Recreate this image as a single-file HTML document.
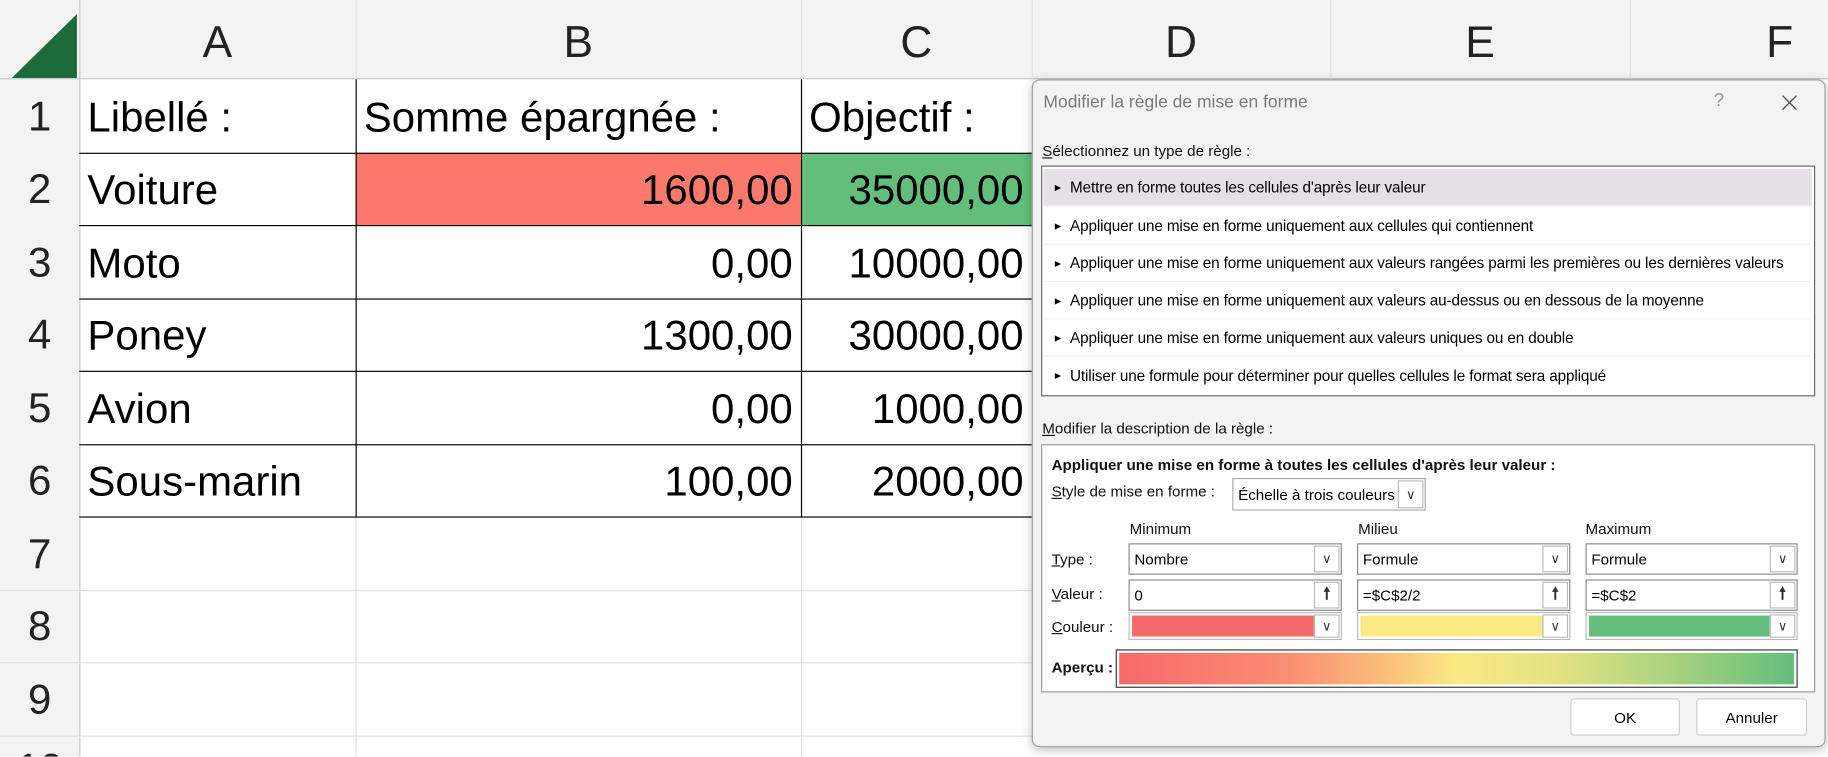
<!DOCTYPE html>
<html><head><meta charset="utf-8"><style>
*{margin:0;padding:0;box-sizing:border-box}
html,body{width:1828px;height:757px;overflow:hidden;background:#fff}
#w{position:absolute;left:0;top:0;width:1568px;height:649px;overflow:hidden;transform:scale(1.16582);transform-origin:0 0;font-family:"Liberation Sans",sans-serif;background:#fff}
.a{position:absolute}
.hdr{background:#f3f3f3}
.col{position:absolute;top:0;height:68px;font-size:38px;color:#222;display:flex;align-items:center;justify-content:center;padding-top:6px}
.rn{position:absolute;left:0;width:68px;height:62px;font-size:36px;color:#222;display:flex;align-items:center;justify-content:center}
.c{position:absolute;height:63px;font-size:36px;color:#000;display:flex;align-items:center;padding:0 7px;white-space:nowrap}
.r{justify-content:flex-end}
.d{font-size:13px;color:#111}
.item{position:absolute;left:2px;width:658px;height:32px;font-size:13.1px;display:flex;align-items:center;padding-left:8px;border-bottom:1px solid #f0f0f0;white-space:nowrap;letter-spacing:-0.1px}
.item span{font-size:9px;margin-right:6px}
.box{position:absolute;background:#fff;border:1px solid #8a8a8a;font-size:13px;display:flex;align-items:center;padding-left:4px}
.btn{position:absolute;right:1px;top:1px;bottom:1px;width:22px;border:1px solid #bbb;background:#fff;display:flex;align-items:center;justify-content:center;font-size:11px;color:#333}
u{text-decoration:underline}
</style></head><body><div id="w">
<div class="a hdr" style="left:0;top:0;width:1568px;height:68px"></div>
<div class="a hdr" style="left:0;top:0;width:68px;height:649px"></div>
<svg class="a" style="left:10px;top:12px" width="57" height="55"><polygon points="56,0 56,55 0,55" fill="#1e6b3a"/></svg>
<div class="col" style="left:68px;width:237px">A</div>
<div class="col" style="left:305px;width:382px">B</div>
<div class="col" style="left:687px;width:198px">C</div>
<div class="col" style="left:885px;width:256px">D</div>
<div class="col" style="left:1141px;width:257px">E</div>
<div class="col" style="left:1398px;width:257px">F</div>
<div class="a" style="left:0;top:67px;width:1568px;height:1px;background:#c8c8c8"></div>
<div class="a" style="left:68px;top:0;width:1px;height:649px;background:#c8c8c8"></div>
<div class="a" style="left:305px;top:0;width:1px;height:68px;background:#e4e4e4"></div>
<div class="a" style="left:687px;top:0;width:1px;height:68px;background:#e4e4e4"></div>
<div class="a" style="left:885px;top:0;width:1px;height:68px;background:#e4e4e4"></div>
<div class="a" style="left:1141px;top:0;width:1px;height:68px;background:#e4e4e4"></div>
<div class="a" style="left:1398px;top:0;width:1px;height:68px;background:#e4e4e4"></div>
<div class="rn" style="top:69px">1</div><div class="rn" style="top:131px">2</div><div class="rn" style="top:194px">3</div><div class="rn" style="top:256px">4</div><div class="rn" style="top:319px">5</div><div class="rn" style="top:381px">6</div><div class="rn" style="top:444px">7</div><div class="rn" style="top:506px">8</div><div class="rn" style="top:569px">9</div>
<div class="a" style="left:14px;top:641px;font-size:36px;line-height:36px;color:#222">10</div>
<div class="a" style="left:0;top:506px;width:885px;height:1px;background:#e0e0e0"></div>
<div class="a" style="left:0;top:568px;width:885px;height:1px;background:#e0e0e0"></div>
<div class="a" style="left:0;top:631px;width:885px;height:1px;background:#e0e0e0"></div>
<div class="a" style="left:305px;top:443px;width:1px;height:206px;background:#e0e0e0"></div>
<div class="a" style="left:687px;top:443px;width:1px;height:206px;background:#e0e0e0"></div>
<div class="a" style="left:305px;top:131px;width:382px;height:62px;background:#fb786c"></div>
<div class="a" style="left:687px;top:131px;width:198px;height:62px;background:#63be7b"></div>
<div class="a" style="left:68px;top:131px;width:817px;height:1px;background:#000"></div>
<div class="a" style="left:68px;top:193px;width:817px;height:1px;background:#000"></div>
<div class="a" style="left:68px;top:256px;width:817px;height:1px;background:#000"></div>
<div class="a" style="left:68px;top:318px;width:817px;height:1px;background:#000"></div>
<div class="a" style="left:68px;top:381px;width:817px;height:1px;background:#000"></div>
<div class="a" style="left:68px;top:443px;width:817px;height:1px;background:#000"></div>
<div class="a" style="left:305px;top:68px;width:1px;height:375px;background:#000"></div>
<div class="a" style="left:687px;top:68px;width:1px;height:375px;background:#000"></div>
<div class="c" style="left:68px;top:69px">Libellé :</div>
<div class="c" style="left:305px;top:69px">Somme épargnée :</div>
<div class="c" style="left:687px;top:69px">Objectif :</div>
<div class="c" style="left:68px;top:131px">Voiture</div>
<div class="c" style="left:68px;top:194px">Moto</div>
<div class="c" style="left:68px;top:256px">Poney</div>
<div class="c" style="left:68px;top:319px">Avion</div>
<div class="c" style="left:68px;top:381px">Sous-marin</div>
<div class="c r" style="left:305px;width:382px;top:131px">1600,00</div>
<div class="c r" style="left:305px;width:382px;top:194px">0,00</div>
<div class="c r" style="left:305px;width:382px;top:256px">1300,00</div>
<div class="c r" style="left:305px;width:382px;top:319px">0,00</div>
<div class="c r" style="left:305px;width:382px;top:381px">100,00</div>
<div class="c r" style="left:687px;width:198px;top:131px">35000,00</div>
<div class="c r" style="left:687px;width:198px;top:194px">10000,00</div>
<div class="c r" style="left:687px;width:198px;top:256px">30000,00</div>
<div class="c r" style="left:687px;width:198px;top:319px">1000,00</div>
<div class="c r" style="left:687px;width:198px;top:381px">2000,00</div>
<div class="a" style="left:885px;top:68px;width:681px;height:573px;background:#f3f3f3;border:1px solid #a0a0a0;border-radius:7px;box-shadow:0 2px 8px rgba(0,0,0,.25)"></div>
<div class="a" style="left:895px;top:79px;font-size:15px;color:#7a7a7a">Modifier la règle de mise en forme</div>
<div class="a" style="left:1470px;top:78px;font-size:16px;color:#999">?</div>
<svg class="a" style="left:1528px;top:81px" width="14" height="14"><path d="M1 1L13 13M13 1L1 13" stroke="#555" stroke-width="1.2"/></svg>
<div class="a d" style="left:894px;top:122px"><u>S</u>électionnez un type de règle :</div>
<div class="a" style="left:893px;top:142px;width:664px;height:198px;background:#fff;border:1px solid #666"></div>
<div class="a" style="left:895px;top:145px;width:659px;height:32px;background:#e6dfe6"></div>
<div class="item" style="left:895px;top:145px"><span>►</span>Mettre en forme toutes les cellules d'après leur valeur</div>
<div class="item" style="left:895px;top:178px"><span>►</span>Appliquer une mise en forme uniquement aux cellules qui contiennent</div>
<div class="item" style="left:895px;top:210px"><span>►</span>Appliquer une mise en forme uniquement aux valeurs rangées parmi les premières ou les dernières valeurs</div>
<div class="item" style="left:895px;top:242px"><span>►</span>Appliquer une mise en forme uniquement aux valeurs au-dessus ou en dessous de la moyenne</div>
<div class="item" style="left:895px;top:274px"><span>►</span>Appliquer une mise en forme uniquement aux valeurs uniques ou en double</div>
<div class="item" style="left:895px;top:306px;border:none"><span>►</span>Utiliser une formule pour déterminer pour quelles cellules le format sera appliqué</div>
<div class="a d" style="left:894px;top:360px"><u>M</u>odifier la description de la règle :</div>
<div class="a" style="left:893px;top:381px;width:664px;height:213px;background:#fff;border:1px solid #999"></div>
<div class="a d" style="left:902px;top:391px;font-weight:bold">Appliquer une mise en forme à toutes les cellules d'après leur valeur :</div>
<div class="a d" style="left:902px;top:414px"><u>S</u>tyle de mise en forme :</div>
<div class="box" style="left:1057px;top:410px;width:166px;height:28px;border-color:#aaa">Échelle à trois couleurs<div class="btn">∨</div></div>
<div class="a d" style="left:969px;top:446px">Minimum</div>
<div class="a d" style="left:1165px;top:446px">Milieu</div>
<div class="a d" style="left:1360px;top:446px">Maximum</div>
<div class="a d" style="left:902px;top:472px"><u>T</u>ype :</div>
<div class="a d" style="left:902px;top:502px"><u>V</u>aleur :</div>
<div class="a d" style="left:902px;top:530px"><u>C</u>ouleur :</div>
<div class="box" style="left:968px;top:466px;width:183px;height:27px">Nombre<div class="btn">∨</div></div>
<div class="box" style="left:1164px;top:466px;width:183px;height:27px">Formule<div class="btn">∨</div></div>
<div class="box" style="left:1360px;top:466px;width:182px;height:27px">Formule<div class="btn">∨</div></div>
<div class="box" style="left:968px;top:497px;width:183px;height:27px">0<div class="btn" style="font-size:14px;font-weight:bold">🠕</div></div>
<div class="box" style="left:1164px;top:497px;width:183px;height:27px">=$C$2/2<div class="btn" style="font-size:14px;font-weight:bold">🠕</div></div>
<div class="box" style="left:1360px;top:497px;width:182px;height:27px">=$C$2<div class="btn" style="font-size:14px;font-weight:bold">🠕</div></div>
<div class="box" style="left:968px;top:525px;width:183px;height:24px;border-color:#bbb;padding:2px"><div style="width:158px;height:18px;background:#f8696b"></div><div class="btn">∨</div></div>
<div class="box" style="left:1164px;top:525px;width:183px;height:24px;border-color:#bbb;padding:2px"><div style="width:158px;height:18px;background:#fbe983"></div><div class="btn">∨</div></div>
<div class="box" style="left:1360px;top:525px;width:182px;height:24px;border-color:#bbb;padding:2px"><div style="width:157px;height:18px;background:#63be7b"></div><div class="btn">∨</div></div>
<div class="a d" style="left:902px;top:565px;font-weight:bold">Aperçu :</div>
<div class="a" style="left:957px;top:557px;width:585px;height:33px;border:1px solid #333;padding:2px;background:#fff"><div style="width:100%;height:100%;background:linear-gradient(90deg,#f8696b 0%,#fa8e72 25%,#fbc77c 42%,#fbe983 50%,#e3e283 65%,#b0d47f 80%,#63be7b 100%)"></div></div>
<div class="a" style="left:1347px;top:599px;width:94px;height:32px;background:#fff;border:1px solid #ccc;border-radius:3px;font-size:13px;display:flex;align-items:center;justify-content:center">OK</div>
<div class="a" style="left:1455px;top:599px;width:95px;height:32px;background:#fff;border:1px solid #ccc;border-radius:3px;font-size:13px;display:flex;align-items:center;justify-content:center">Annuler</div>
</div></body></html>
